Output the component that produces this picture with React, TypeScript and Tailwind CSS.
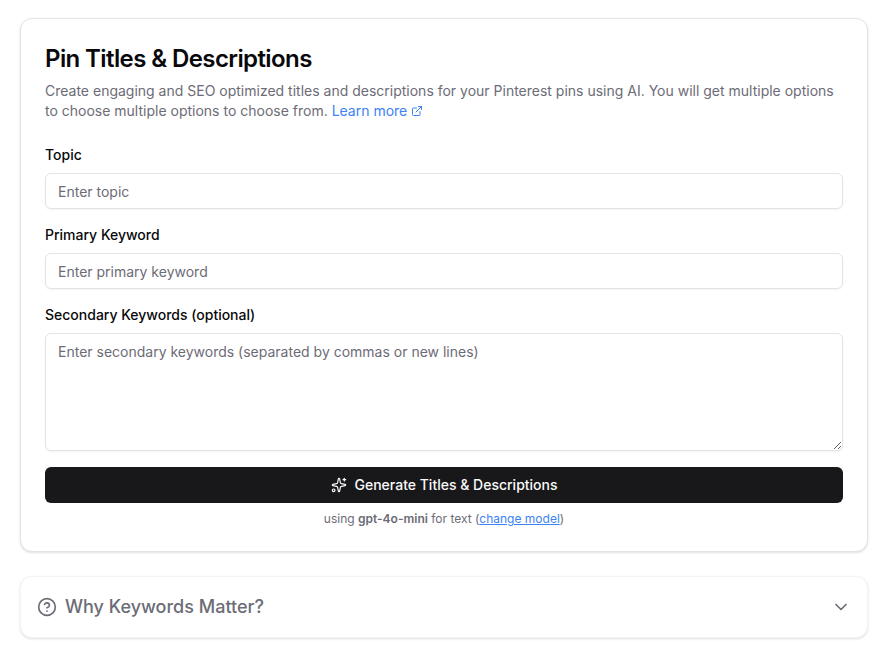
import { ChevronDown, CircleHelp, ExternalLink, Sparkles } from "lucide-react";

const inputClass =
  "block w-full h-9 rounded-md border border-[#e4e4e7] bg-white px-3 text-sm text-[#09090b] placeholder:text-[#6c6c76] shadow-xs outline-none";

function Field({ label, placeholder }: { label: string; placeholder: string }) {
  return (
    <div className="flex flex-col gap-2">
      <label className="text-sm leading-5 font-medium text-[#09090b]">{label}</label>
      <input className={inputClass} placeholder={placeholder} />
    </div>
  );
}

export default function App() {
  return (
    <div className="min-h-[658px] bg-white px-5 pt-[18px] font-['Inter',sans-serif]">
      <div className="rounded-xl border border-[#e4e4e7] bg-white p-6 shadow">
        <h1 className="text-2xl leading-8 font-semibold tracking-tight text-[#09090b]">
          Pin Titles &amp; Descriptions
        </h1>
        <p className="mt-1.5 text-sm leading-5 text-[#6c6c76]">
          Create engaging and SEO optimized titles and descriptions for your Pinterest pins using AI. You will get multiple options to choose multiple options to choose from.{" "}
          <a className="text-[#3b82f6]" href="#">
            Learn more
            <ExternalLink className="ml-1 inline-block h-3 w-3 align-[-1px]" />
          </a>
        </p>
        <form className="mt-6 flex flex-col gap-4">
          <Field label="Topic" placeholder="Enter topic" />
          <Field label="Primary Keyword" placeholder="Enter primary keyword" />
          <div className="flex flex-col gap-2">
            <label className="text-sm leading-5 font-medium text-[#09090b]">Secondary Keywords (optional)</label>
            <textarea
              className="block h-[118px] w-full rounded-md border border-[#e4e4e7] bg-white px-3 py-2 text-sm text-[#09090b] placeholder:text-[#6c6c76] shadow-xs outline-none"
              placeholder="Enter secondary keywords (separated by commas or new lines)"
            />
          </div>
          <div>
            <button
              type="button"
              className="flex h-9 w-full items-center justify-center gap-2 rounded-md bg-[#18181b] text-sm font-medium text-[#fafafa]"
            >
              <Sparkles className="h-4 w-4" strokeWidth={1.75} />
              Generate Titles &amp; Descriptions
            </button>
            <p className="mt-2 text-center text-xs leading-4 text-[#6c6c76]">
              using <span className="font-semibold">gpt-4o-mini</span> for text (
              <a className="text-[#3b82f6] underline" href="#">change model</a>)
            </p>
          </div>
        </form>
      </div>
      <div className="mt-6 flex items-center justify-between rounded-xl border border-[#f4f4f5] bg-white p-4 shadow">
        <div className="flex items-center gap-2">
          <CircleHelp className="h-5 w-5 text-[#6c6c76]" />
          <span className="text-lg leading-7 font-medium text-[#6c6c76]">Why Keywords Matter?</span>
        </div>
        <ChevronDown className="h-5 w-5 text-[#6c6c76]" />
      </div>
    </div>
  );
}
